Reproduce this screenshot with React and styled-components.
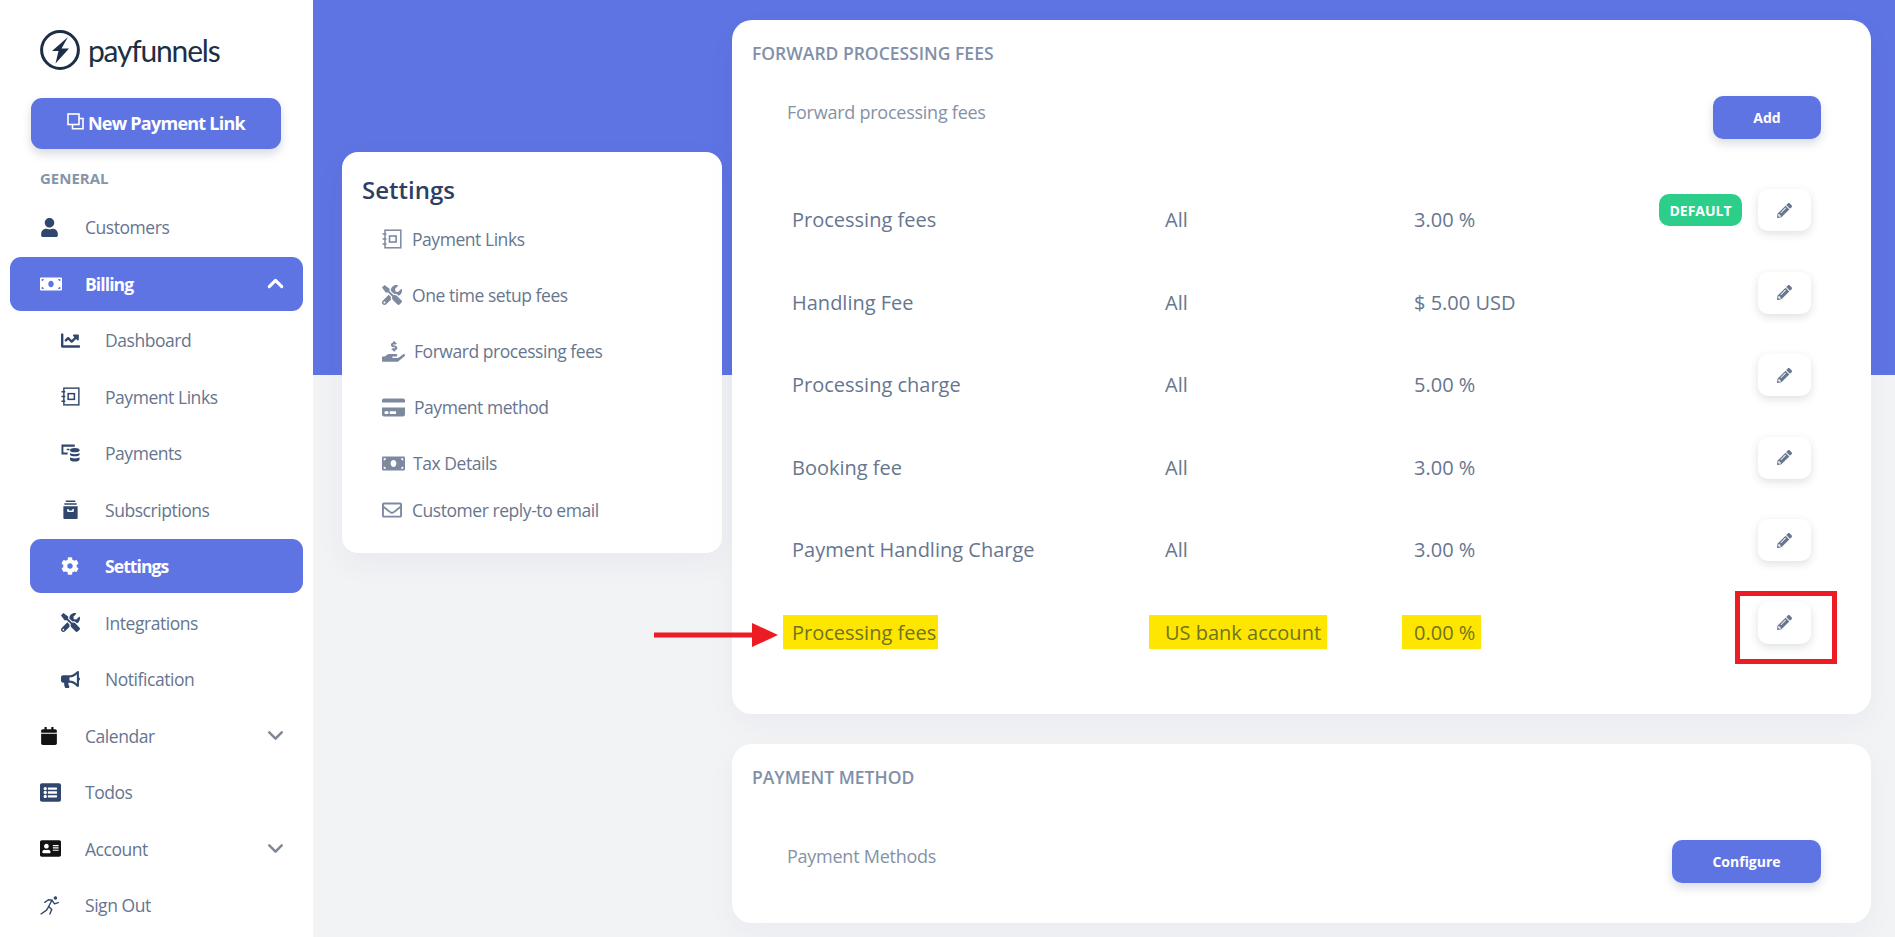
import React from "react";
import styled, { createGlobalStyle } from "styled-components";
import {
  FaUser, FaMoneyBill, FaChartLine, FaCog, FaTools, FaBullhorn, FaCalendar, FaListAlt,
  FaAddressCard, FaHandHoldingUsd, FaCreditCard, FaRegEnvelope, FaPencilAlt,
} from "react-icons/fa";
import { ChevronDown, ChevronUp } from "lucide-react";

const BLUE = "#5f74e3";
const PAGE_BG = "#f1f3f5";
const FONT = '"Open Sans", "Noto Sans", sans-serif';

const Global = createGlobalStyle`
  html, body { margin: 0; padding: 0; height: 937px; overflow: hidden; background: ${PAGE_BG}; }
  body { font-family: ${FONT}; }
  * { box-sizing: border-box; }
`;

const Page = styled.div`
  display: flex;
  width: 1895px;
  height: 937px;
  overflow: hidden;
`;

const Sidebar = styled.aside`
  width: 313px;
  flex: none;
  background: #fff;
  padding: 30px 10px 0;
`;

const Logo = styled.div`
  display: flex;
  align-items: center;
  gap: 8px;
  height: 40px;
  padding-left: 30px;
`;

const LogoText = styled.span`
  font-family: "Lato", sans-serif;
  font-size: 30px;
  line-height: 40px;
  color: #1c2f44;
  letter-spacing: -1.2px;
`;

const NewLink = styled.button`
  display: flex;
  align-items: center;
  justify-content: center;
  gap: 4px;
  width: 250px;
  height: 51px;
  margin: 28px 0 0 21px;
  padding: 0 0 2px;
  border: 0;
  border-radius: 11px;
  background: ${BLUE};
  color: #fff;
  font: 700 18px ${FONT};
  letter-spacing: -0.75px;
  box-shadow: 0 5px 10px rgba(80, 90, 130, 0.22);
`;

const SectionLabel = styled.div`
  margin: 20px 0 0 30px;
  height: 18px;
  font-size: 15px;
  font-weight: 700;
  line-height: 18px;
  color: #8794a8;
`;

const Nav = styled.nav`
  display: flex;
  flex-direction: column;
  gap: 2.5px;
  margin-top: 13px;
`;

const NavRow = styled.div`
  display: flex;
  align-items: center;
  height: 54px;
  margin-left: ${(p) => (p.$sub ? "20px" : "0")};
  padding: 0 20px 0 ${(p) => (p.$sub ? "31px" : "30px")};
  border-radius: 11px;
  background: ${(p) => (p.$active ? BLUE : "transparent")};
  color: ${(p) => (p.$active ? "#fff" : "#66758f")};
  font-size: 17.5px;
  font-weight: ${(p) => (p.$active ? 700 : 400)};
  letter-spacing: ${(p) => (p.$active ? "-0.9px" : "-0.45px")};
`;

const NavIcon = styled.span`
  display: flex;
  align-items: center;
  width: ${(p) => (p.$sub ? "44px" : "45px")};
  flex: none;
  color: ${(p) => (p.$active ? "#fff" : p.$black ? "#121212" : "#30466c")};
  font-size: ${(p) => p.$size || 20}px;
`;

const NavLabel = styled.span`
  flex: 1;
`;

const Chevron = styled.span`
  display: flex;
  flex: none;
  width: 16px;
  justify-content: center;
  color: ${(p) => (p.$active ? "#fff" : "#7f8793")};
  & > svg { flex: none; }
`;

const Main = styled.main`
  flex: 1;
  display: flex;
  align-items: flex-start;
  gap: 10px;
  padding-left: 29px;
  background: linear-gradient(${BLUE} 375px, ${PAGE_BG} 375px);
`;

const SettingsCard = styled.section`
  width: 380px;
  height: 401px;
  margin-top: 152px;
  padding: 22px 20px 0;
  border-radius: 16px;
  background: #fff;
  box-shadow: 0 10px 30px rgba(50, 60, 90, 0.05);
`;

const SettingsTitle = styled.h2`
  margin: 0;
  font-size: 24px;
  line-height: 32px;
  font-weight: 600;
  color: #2d3f63;
`;

const SettingsList = styled.div`
  display: flex;
  flex-direction: column;
  margin-top: 5px;
`;

const SettingsItem = styled.div`
  display: flex;
  align-items: center;
  gap: ${(p) => p.$gap || 10}px;
  height: ${(p) => p.$h || 56}px;
  padding-left: 20px;
  color: #67768f;
  font-size: 17.5px;
  letter-spacing: -0.45px;
`;

const SettingsIcon = styled.span`
  display: flex;
  align-items: center;
  justify-content: flex-start;
  width: ${(p) => p.$w || 20}px;
  color: #7c899f;
  font-size: ${(p) => p.$size || 20}px;
`;

const Column = styled.div`
  display: flex;
  flex-direction: column;
  gap: 30px;
  width: 1139px;
  padding-top: 20px;
`;

const Card = styled.section`
  height: ${(p) => p.$h}px;
  padding-top: 22px;
  border-radius: 20px;
  background: #fff;
  box-shadow: 0 10px 30px rgba(50, 60, 90, 0.04);
`;

const CardTitle = styled.h3`
  margin: 0;
  padding-left: 20px;
  font-size: 17.5px;
  line-height: 22px;
  font-weight: 600;
  color: #8190a8;
`;

const CardHead = styled.div`
  display: flex;
  justify-content: space-between;
  align-items: flex-start;
  margin-top: ${(p) => p.$top}px;
  padding: 0 50px 0 55px;
`;

const CardSub = styled.span`
  font-size: 18px;
  line-height: 32px;
  letter-spacing: -0.25px;
  color: #8492a6;
`;

const PrimaryButton = styled.button`
  width: ${(p) => p.$w}px;
  height: 43px;
  border: 0;
  border-radius: 10px;
  background: ${BLUE};
  color: #fff;
  font: 700 14px ${FONT};
  box-shadow: 0 5px 10px rgba(80, 90, 130, 0.2);
`;

const FeeList = styled.div`
  margin-top: 50px;
`;

const FeeRow = styled.div`
  position: relative;
  display: grid;
  grid-template-columns: 373px 249px 1fr auto;
  align-items: start;
  height: 82.6px;
  padding: 0 60px;
  font-size: 20px;
  color: #67768f;
`;

const FeeCell = styled.div`
  margin-top: 19px;
  line-height: 24px;
`;

const Mark = styled.span`
  display: inline-block;
  margin: -6px 0 0 -${(p) => p.$left}px;
  padding: 6px ${(p) => p.$right}px 4px ${(p) => p.$left}px;
  background: #ffe600;
  color: #6e7420;
`;

const RowActions = styled.div`
  display: flex;
  align-items: flex-start;
  gap: 16px;
`;

const Badge = styled.span`
  display: flex;
  align-items: center;
  justify-content: center;
  width: 83px;
  height: 32px;
  margin-top: 5px;
  border-radius: 10px;
  background: #2dce89;
  color: #fff;
  font-size: 14px;
  font-weight: 700;
`;

const EditButton = styled.button`
  display: flex;
  align-items: center;
  justify-content: center;
  width: 53px;
  height: 42px;
  border: 0;
  border-radius: 10px;
  background: #fff;
  color: #68778f;
  font-size: 15px;
  box-shadow: 0 3px 8px rgba(50, 60, 90, 0.16);
`;

const RedBox = styled.div`
  position: absolute;
  top: -11px;
  right: 34px;
  width: 102px;
  height: 73px;
  border: 5px solid #ed1c24;
  pointer-events: none;
`;

const Arrow = styled.svg`
  position: absolute;
  left: -78px;
  top: 21px;
`;

const Notebook = () => (
  <svg width="1em" height="1em" viewBox="0 0 20 20" fill="none" stroke="currentColor" strokeWidth="1.5">
    <rect x="3" y="1.2" width="15.8" height="17.6" />
    <rect x="7.5" y="7" width="6.6" height="6" strokeWidth="1.6" />
    <path d="M0.5 5h4M0.5 10h4M0.5 15h4" />
  </svg>
);

const MonitorDb = () => (
  <svg width="1em" height="1em" viewBox="0 0 20 20" fill="currentColor">
    <path d="M0.5 0.5H14.5V3H2.5V9H7V11H0.5Z" />
    <path d="M6 5l3 0v1.5l-3 0z" />
    <ellipse cx="14.5" cy="6.5" rx="5" ry="2.2" />
    <path d="M9.5 9.5c1 1.6 9 1.6 10 0v2c-1 1.8-9 1.8-10 0zM9.5 14c1 1.6 9 1.6 10 0v2.5c-1 2.6-9 2.6-10 0z" />
  </svg>
);

const ArchiveStack = () => (
  <svg width="1em" height="1em" viewBox="0 0 20 20" fill="currentColor">
    <path d="M5 0.5h10v1.6H5zM3.5 3.5h13v1.6h-13z" />
    <path d="M2.5 6.5h15V19a1 1 0 0 1-1 1h-13a1 1 0 0 1-1-1zM6.5 9.5v2.2a1 1 0 0 0 1 1h5a1 1 0 0 0 1-1V9.5h-1.6v1.6H8.1V9.5z" fillRule="evenodd" />
  </svg>
);

const CloneIcon = () => (
  <svg width="17" height="17" viewBox="0 0 17 17" fill="none" stroke="currentColor" strokeWidth="1.6" style={{ marginTop: -3 }}>
    <rect x="1" y="1" width="11" height="10.5" />
    <path d="M5.5 11.5V15.8H16V5.5H12" />
  </svg>
);

const Runner = () => (
  <svg width="1em" height="1em" viewBox="0 0 18 18" fill="none" stroke="currentColor" strokeWidth="1.3" strokeLinecap="round" strokeLinejoin="round">
    <circle cx="14.6" cy="1.9" r="1.7" fill="currentColor" stroke="none" />
    <path d="M4.5 6L8 3.6L11.3 4L8.2 10L11.2 12.8L9.3 17" />
    <path d="M11.3 4L13.8 7.4L17.3 6.2" />
    <path d="M8.2 10L6.2 13.4L1 17" />
  </svg>
);

const BoltLogo = () => (
  <svg width="40" height="40" viewBox="0 0 40 40">
    <circle cx="20" cy="20" r="18.4" fill="none" stroke="#1c2f44" strokeWidth="3" />
    <path d="M28 7 L12 21 H18.5 L15.5 33.5 L29 18.5 H21.5 Z" fill="#1c2f44" />
  </svg>
);

const nav = [
  { label: "Customers", icon: <FaUser />, size: 19 },
  { label: "Billing", icon: <FaMoneyBill />, size: 22, active: true, chevron: "up" },
  { label: "Dashboard", icon: <FaChartLine />, sub: true, size: 19 },
  { label: "Payment Links", icon: <Notebook />, sub: true, size: 19 },
  { label: "Payments", icon: <MonitorDb />, sub: true, size: 19 },
  { label: "Subscriptions", icon: <ArchiveStack />, sub: true, size: 19 },
  { label: "Settings", icon: <FaCog />, sub: true, active: true, size: 18 },
  { label: "Integrations", icon: <FaTools />, sub: true, size: 19 },
  { label: "Notification", icon: <FaBullhorn />, sub: true, size: 19 },
  { label: "Calendar", icon: <FaCalendar />, black: true, size: 18, chevron: "down" },
  { label: "Todos", icon: <FaListAlt />, size: 21 },
  { label: "Account", icon: <FaAddressCard />, black: true, size: 21, chevron: "down" },
  { label: "Sign Out", icon: <Runner />, size: 19 },
];

const settingsLinks = [
  { label: "Payment Links", icon: <Notebook />, gap: 10 },
  { label: "One time setup fees", icon: <FaTools />, gap: 10 },
  { label: "Forward processing fees", icon: <FaHandHoldingUsd />, w: 23, size: 23, gap: 9 },
  { label: "Payment method", icon: <FaCreditCard />, w: 23, size: 23, gap: 9 },
  { label: "Tax Details", icon: <FaMoneyBill />, w: 23, size: 23, gap: 8 },
  { label: "Customer reply-to email", icon: <FaRegEnvelope />, gap: 10, h: 37 },
];

const fees = [
  { name: "Processing fees", type: "All", amount: "3.00 %", isDefault: true },
  { name: "Handling Fee", type: "All", amount: "$ 5.00 USD" },
  { name: "Processing charge", type: "All", amount: "5.00 %" },
  { name: "Booking fee", type: "All", amount: "3.00 %" },
  { name: "Payment Handling Charge", type: "All", amount: "3.00 %" },
  { name: "Processing fees", type: "US bank account", amount: "0.00 %", marked: true },
];

export default function App() {
  return (
    <>
      <Global />
      <Page>
        <Sidebar>
          <Logo>
            <BoltLogo />
            <LogoText>payfunnels</LogoText>
          </Logo>
          <NewLink>
            <CloneIcon />
            New Payment Link
          </NewLink>
          <SectionLabel>GENERAL</SectionLabel>
          <Nav>
            {nav.map((n) => (
              <NavRow key={n.label} $sub={n.sub} $active={n.active}>
                <NavIcon $sub={n.sub} $active={n.active} $black={n.black} $size={n.size}>{n.icon}</NavIcon>
                <NavLabel>{n.label}</NavLabel>
                {n.chevron && (
                  <Chevron $active={n.active}>
                    {n.chevron === "up" ? <ChevronUp size={25} strokeWidth={3} /> : <ChevronDown size={25} strokeWidth={2.4} />}
                  </Chevron>
                )}
              </NavRow>
            ))}
          </Nav>
        </Sidebar>
        <Main>
          <SettingsCard>
            <SettingsTitle>Settings</SettingsTitle>
            <SettingsList>
              {settingsLinks.map((s) => (
                <SettingsItem key={s.label} $gap={s.gap} $h={s.h}>
                  <SettingsIcon $w={s.w} $size={s.size}>{s.icon}</SettingsIcon>
                  {s.label}
                </SettingsItem>
              ))}
            </SettingsList>
          </SettingsCard>
          <Column>
            <Card $h={694}>
              <CardTitle>FORWARD PROCESSING FEES</CardTitle>
              <CardHead $top={32}>
                <CardSub>Forward processing fees</CardSub>
                <PrimaryButton $w={108}>Add</PrimaryButton>
              </CardHead>
              <FeeList>
                {fees.map((f, i) => (
                  <FeeRow key={i}>
                    {f.marked ? (
                      <>
                        <FeeCell><Mark $left={9} $right={2}>{f.name}</Mark></FeeCell>
                        <FeeCell><Mark $left={16} $right={6}>{f.type}</Mark></FeeCell>
                        <FeeCell><Mark $left={12} $right={6}>{f.amount}</Mark></FeeCell>
                      </>
                    ) : (
                      <>
                        <FeeCell>{f.name}</FeeCell>
                        <FeeCell>{f.type}</FeeCell>
                        <FeeCell>{f.amount}</FeeCell>
                      </>
                    )}
                    <RowActions>
                      {f.isDefault && <Badge>DEFAULT</Badge>}
                      <EditButton aria-label="Edit"><FaPencilAlt /></EditButton>
                    </RowActions>
                    {f.marked && (
                      <>
                        <RedBox />
                        <Arrow width="124" height="24" viewBox="0 0 124 24">
                          <path d="M0 9.5H98V0L124 12L98 24V14.5H0Z" fill="#ed1c24" />
                        </Arrow>
                      </>
                    )}
                  </FeeRow>
                ))}
              </FeeList>
            </Card>
            <Card $h={179}>
              <CardTitle>PAYMENT METHOD</CardTitle>
              <CardHead $top={52}>
                <CardSub>Payment Methods</CardSub>
                <PrimaryButton $w={149}>Configure</PrimaryButton>
              </CardHead>
            </Card>
          </Column>
        </Main>
      </Page>
    </>
  );
}
